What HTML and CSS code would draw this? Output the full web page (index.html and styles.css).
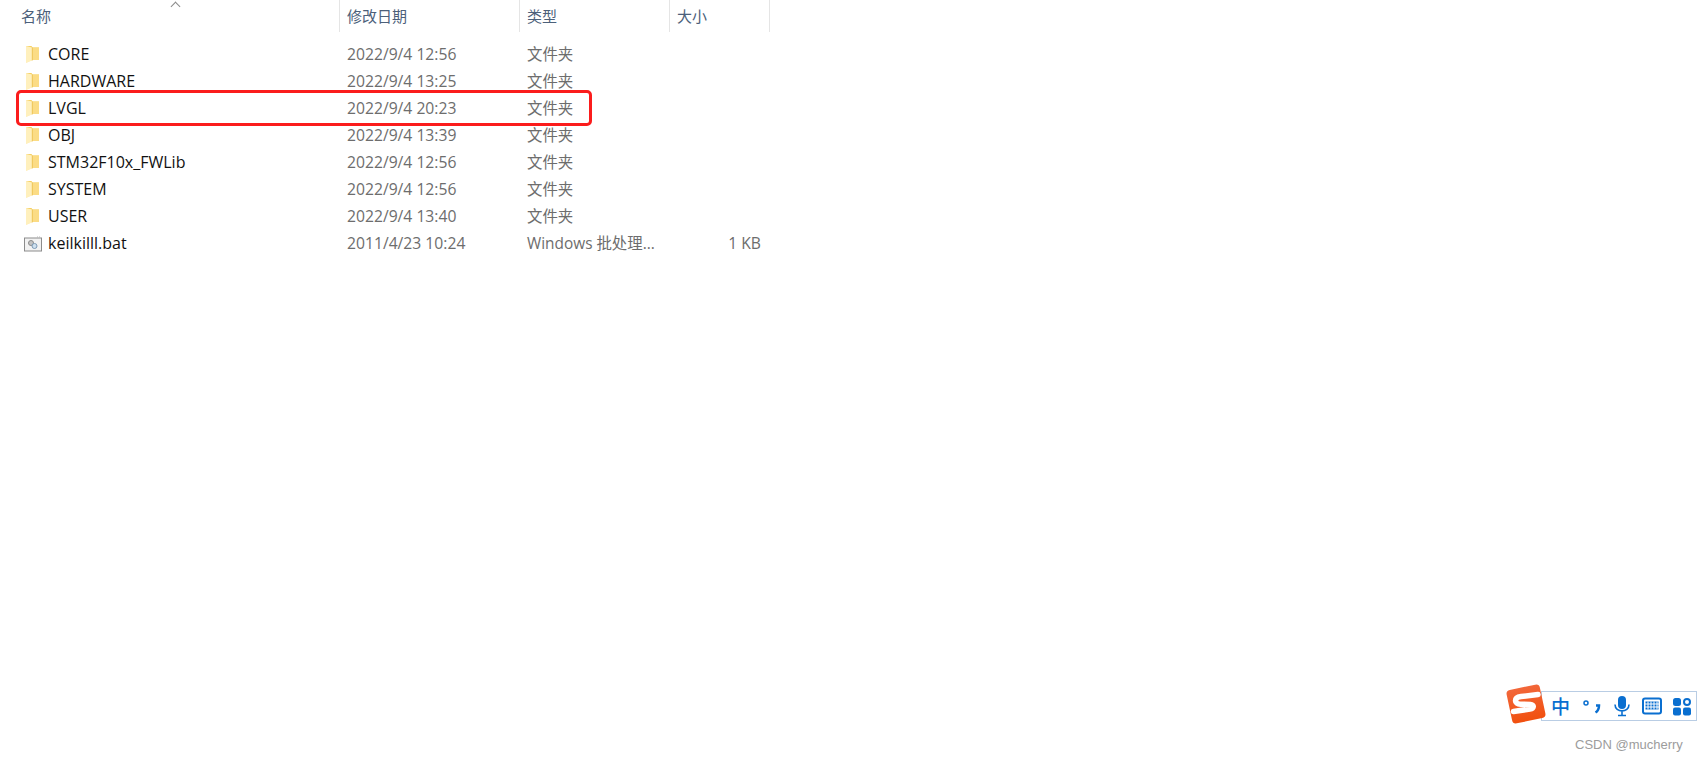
FILE: index.html
```html
<!DOCTYPE html>
<html lang="zh-CN">
<head>
    <meta charset="UTF-8">
    <title>LVGL</title>
    <link rel="stylesheet" href="styles.css">
</head>
<body>
    <!-- shared icons -->
    <svg class="defs" width="0" height="0">
        <symbol id="folder" viewBox="0 0 13 19">
            <path d="M0 1h5.500l1 1.500H13V15H6L.5 17.500 0 16z" fill="#f5cf63"/>
            <path d="M6 2.500h7V15H6z" fill="#fbdc85"/>
            <path d="M0 1v17l6-2.500V2.500z" fill="#fff0bd"/>
            <path d="M6.300 2.500V15.500" stroke="#e9bf4d" stroke-width=".8"/>
        </symbol>
    </svg>

    <!-- Column headers -->
    <div class="head">
        <div class="col-name">名称<span class="sort"></span></div>
        <div class="col-date">修改日期</div>
        <div class="col-type">类型</div>
        <div class="col-size">大小</div>
    </div>

    <!-- File list -->
    <div class="list">
        <div class="row">
            <div class="col-name"><svg class="icon"><use href="#folder"/></svg>CORE</div>
            <div class="col-date">2022/9/4 12:56</div>
            <div class="col-type">文件夹</div>
            <div class="col-size"></div>
        </div>
        <div class="row">
            <div class="col-name"><svg class="icon"><use href="#folder"/></svg>HARDWARE</div>
            <div class="col-date">2022/9/4 13:25</div>
            <div class="col-type">文件夹</div>
            <div class="col-size"></div>
        </div>
        <div class="row">
            <div class="col-name"><svg class="icon"><use href="#folder"/></svg>LVGL</div>
            <div class="col-date">2022/9/4 20:23</div>
            <div class="col-type">文件夹</div>
            <div class="col-size"></div>
            <div class="mark"></div>
        </div>
        <div class="row">
            <div class="col-name"><svg class="icon"><use href="#folder"/></svg>OBJ</div>
            <div class="col-date">2022/9/4 13:39</div>
            <div class="col-type">文件夹</div>
            <div class="col-size"></div>
        </div>
        <div class="row">
            <div class="col-name"><svg class="icon"><use href="#folder"/></svg>STM32F10x_FWLib</div>
            <div class="col-date">2022/9/4 12:56</div>
            <div class="col-type">文件夹</div>
            <div class="col-size"></div>
        </div>
        <div class="row">
            <div class="col-name"><svg class="icon"><use href="#folder"/></svg>SYSTEM</div>
            <div class="col-date">2022/9/4 12:56</div>
            <div class="col-type">文件夹</div>
            <div class="col-size"></div>
        </div>
        <div class="row">
            <div class="col-name"><svg class="icon"><use href="#folder"/></svg>USER</div>
            <div class="col-date">2022/9/4 13:40</div>
            <div class="col-type">文件夹</div>
            <div class="col-size"></div>
        </div>
        <div class="row">
            <div class="col-name">
                <svg class="icon-bat" viewBox="0 0 18 15">
                    <rect x=".5" y="1.500" width="17" height="13" fill="#f2f2f2" stroke="#8c8c8c"/>
                    <path d="M13 .5h4" stroke="#b5b5b5" stroke-dasharray="1 1"/>
                    <circle cx="7" cy="6.500" r="2.500" fill="#c4c4c4" stroke="#8a8a8a"/>
                    <circle cx="10.500" cy="9.500" r="2.500" fill="#cfe0ee" stroke="#7d9ab5"/>
                </svg>keilkilll.bat
            </div>
            <div class="col-date">2011/4/23 10:24</div>
            <div class="col-type">Windows 批处理...</div>
            <div class="col-size">1 KB</div>
        </div>
    </div>

    <!-- IME toolbar -->
    <div class="ime">
        <svg class="ime-logo" viewBox="0 0 40 40">
            <defs>
                <linearGradient id="logo-fill" x1="0" y1="0" x2="0" y2="1">
                    <stop offset="0" stop-color="#f2673a"/>
                    <stop offset="1" stop-color="#f1500f"/>
                </linearGradient>
            </defs>
            <rect x="3" y="3" width="34" height="34" rx="4" fill="url(#logo-fill)" transform="rotate(-12 20 20)"/>
            <path d="M32 10.500 15 12.500C7.500 13.500 8 20 14.500 20.200l10 .3c4 .2 3.500 4-.5 4.500L7.500 27.500" fill="none" stroke="#fff" stroke-width="5.500" stroke-linecap="round"/>
        </svg>
        <div class="ime-bar">
            <span class="ime-zh">中</span>
            <svg class="ime-icon" viewBox="0 0 22 22">
                <circle cx="5" cy="8" r="2" fill="none" stroke="#0a6fd0" stroke-width="1.500"/>
                <path d="M15 10.500h3c0 3-1 5.500-3.500 7" fill="none" stroke="#0a6fd0" stroke-width="2.500"/>
            </svg>
            <svg class="ime-icon" viewBox="0 0 22 22">
                <rect x="7" y="1" width="8" height="13" rx="4" fill="#0a6fd0"/>
                <path d="M4 9.500c0 8.500 14 8.500 14 0M11 16v4M7 20.500h8" fill="none" stroke="#0a6fd0" stroke-width="1.600"/>
            </svg>
            <svg class="ime-icon" viewBox="0 0 22 22">
                <rect x="2" y="3.500" width="18" height="15" rx="2" fill="none" stroke="#0a6fd0" stroke-width="2"/>
                <path d="M4.500 7.500h13M4.500 10.500h13M4.500 13.500h13" stroke="#0a6fd0" stroke-width="2"/>
                <path d="M7 6.500v8M10 6.500v8M13 6.500v8M16 6.500v8" stroke="#fff" stroke-width="1"/>
            </svg>
            <svg class="ime-icon" viewBox="0 0 22 22">
                <rect x="2" y="3" width="8" height="8" rx="2.500" fill="#0a6fd0"/>
                <circle cx="16" cy="7" r="3" fill="none" stroke="#0a6fd0" stroke-width="2"/>
                <rect x="2" y="12.500" width="8" height="8" rx="2" fill="#0a6fd0"/>
                <rect x="12" y="12.500" width="8" height="8" rx="2" fill="#0a6fd0"/>
            </svg>
        </div>
    </div>

    <div class="watermark">CSDN @mucherry</div>
</body>
</html>
```

FILE: styles.css
```css
* {
    box-sizing: border-box;
}

body {
    margin: 0;
    height: 762px;
    background: #fff;
    position: relative;
    overflow: hidden;
    font-family: "Open Sans", "Noto Sans CJK SC", sans-serif;
    font-size: 15px;
    color: #6d6d6d;
}

.defs {
    position: absolute;
}

/* Column widths, dividers sit on the right edge of each */
.col-name {
    width: 340px;
    flex: none;
    display: flex;
    align-items: center;
}

.col-date {
    width: 180px;
    padding-left: 7px;
    flex: none;
}

.col-type {
    width: 150px;
    padding-left: 7px;
    flex: none;
}

.col-size {
    width: 100px;
    padding-left: 7px;
    flex: none;
}

/* Header */
.head {
    display: flex;
    height: 32px;
    color: #4c607a;
}

.head > div {
    border-right: 1px solid #e5e5e5;
    line-height: 32px;
    height: 32px;
    position: relative;
}

.head .col-name {
    padding-left: 21px;
}

.sort {
    position: absolute;
    left: 172px;
    top: 3px;
    width: 7px;
    height: 7px;
    border-left: 1px solid #8a8a8a;
    border-top: 1px solid #8a8a8a;
    transform: rotate(45deg);
}

/* Rows */
.list {
    padding-top: 9px;
}

.row {
    display: flex;
    height: 27px;
    line-height: 27px;
    position: relative;
}

.row .col-name {
    color: #111;
    font-size: 16px;
}

.row .col-date {
    font-size: 15.7px;
}

.row .col-type {
    font-size: 15.4px;
}

.row .col-size {
    font-size: 15.7px;
    text-align: right;
    padding-right: 9px;
}

.icon {
    width: 13px;
    height: 19px;
    margin-left: 26px;
    margin-right: 9px;
    flex: none;
}

.icon-bat {
    width: 18px;
    height: 16px;
    margin-left: 24px;
    margin-right: 6px;
    flex: none;
}

/* Red highlight drawn over the LVGL row */
.mark {
    position: absolute;
    left: 16px;
    top: -5px;
    width: 576px;
    height: 36px;
    border: 3px solid #fb1c1c;
    border-radius: 5px;
}

/* IME toolbar */
.ime {
    position: absolute;
    left: 1506px;
    top: 684px;
    width: 191px;
    height: 40px;
}

.ime-logo {
    position: absolute;
    left: 0;
    top: 0;
    width: 40px;
    height: 40px;
    z-index: 1;
}

.ime-bar {
    position: absolute;
    left: 35px;
    top: 7px;
    right: 0;
    height: 30px;
    border: 1px solid #b9cde4;
    background: #fff;
    display: flex;
    align-items: center;
    gap: 8px;
    padding-left: 9px;
}

.ime-zh {
    font-size: 19px;
    font-weight: 500;
    line-height: 22px;
    width: 22px;
    color: #0a6fd0;
    font-family: "Noto Sans CJK SC", sans-serif;
}

.ime-icon {
    width: 22px;
    height: 22px;
    flex: none;
}

.watermark {
    position: absolute;
    left: 1575px;
    top: 737px;
    font-family: "Liberation Sans", sans-serif;
    font-size: 13px;
    line-height: 15px;
    color: #9c9c9c;
}
```
